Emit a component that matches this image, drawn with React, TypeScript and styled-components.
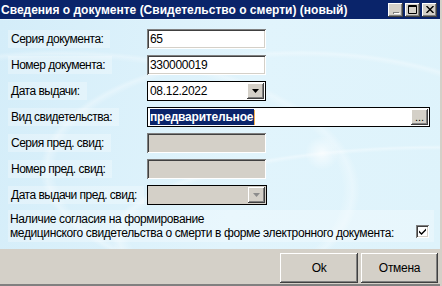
import React from "react";
import styled, { createGlobalStyle } from "styled-components";

const GlobalStyle = createGlobalStyle`
  html, body {
    margin: 0;
    padding: 0;
    background: #d4d0c8;
  }
  body {
    font-family: "Liberation Sans", Arial, sans-serif;
    font-size: 12px;
    color: #000;
  }
`;

const Window = styled.div`
  width: 442px;
  height: 286px;
  box-sizing: border-box;
  padding-right: 2px;
  display: flex;
  flex-direction: column;
  background: #d4d0c8;
  overflow: hidden;
`;

const TitleBar = styled.div`
  height: 19px;
  flex: none;
  display: flex;
  align-items: center;
  background: #0a246a;
  border-bottom: 1px solid #e9f7fd;
  padding: 0 3px 0 1px;
`;

const Title = styled.div`
  flex: 1;
  color: #fff;
  font-weight: bold;
  font-size: 12px;
  letter-spacing: 0;
  white-space: nowrap;
`;

const TitleButtons = styled.div`
  display: flex;
  align-items: center;
`;

const CaptionButton = styled.div<{ $gap?: number }>`
  width: 15px;
  height: 14px;
  margin-left: ${(p) => p.$gap ?? 0}px;
  display: flex;
  align-items: center;
  justify-content: center;
  background: #d4d0c8;
  box-shadow: inset -1px -1px #404040, inset 1px 1px #fff, inset -2px -2px #808080;
`;

const Body = styled.div`
  flex: 1;
  padding: 9px 6px 0 8px;
  background:
    radial-gradient(circle at 322px 133px, rgba(255, 255, 255, 0.7) 0, rgba(255, 255, 255, 0) 17px),
    radial-gradient(ellipse 330px 90px at 440px 215px, transparent 94%, rgba(255, 255, 255, 0.35) 97.5%, transparent 100%),
    radial-gradient(ellipse 260px 120px at 300px 150px, transparent 94%, rgba(255, 255, 255, 0.3) 97.5%, transparent 100%),
    radial-gradient(ellipse 300px 140px at 60px 170px, transparent 94%, rgba(255, 255, 255, 0.28) 97.5%, transparent 100%),
    linear-gradient(100deg, #d4edf9 0%, #e1f4fc 55%, #def3fb 100%);
`;

const Form = styled.div`
  display: grid;
  grid-template-columns: 139px auto;
  grid-auto-rows: 20px;
  row-gap: 6px;
`;

const Label = styled.div`
  align-self: center;
  justify-self: start;
  height: 18px;
  line-height: 18px;
  padding: 0 7px 0 3px;
  background: rgba(255, 255, 255, 0.28);
  letter-spacing: -0.5px;
  white-space: nowrap;
`;

const Field = styled.div<{ $width: number; $disabled?: boolean; $framed?: boolean }>`
  width: ${(p) => p.$width}px;
  height: 20px;
  box-sizing: border-box;
  display: flex;
  align-items: center;
  padding: ${(p) => (p.$framed ? "1px" : "2px")};
  background: ${(p) => (p.$disabled ? "#d4d0c8" : "#fff")};
  border: ${(p) => (p.$framed ? "1px solid #000" : "none")};
  box-shadow: ${(p) =>
    p.$framed
      ? "none"
      : "inset 1px 1px #808080, inset -1px -1px #fff, inset 2px 2px #404040, inset -2px -2px #d4d0c8"};
`;

const FieldText = styled.span`
  flex: 1;
  display: flex;
  align-items: center;
  height: 16px;
  padding-left: 1px;
  white-space: nowrap;
  letter-spacing: -0.3px;
`;

const Selected = styled.span`
  background: #0a246a;
  color: #fff;
  font-weight: bold;
  letter-spacing: -0.2px;
  line-height: 16px;
  padding-right: 1px;
`;

const Caret = styled.span`
  width: 1px;
  height: 15px;
  background: #f0b050;
`;

const SmallButton = styled.div`
  flex: none;
  width: 17px;
  height: 16px;
  display: flex;
  align-items: center;
  justify-content: center;
  background: #d4d0c8;
  box-shadow: inset -1px -1px #404040, inset 1px 1px #fff, inset -2px -2px #808080;
  font-size: 11px;
  line-height: 10px;
`;

const ConsentRow = styled.div`
  margin-top: 5px;
  height: 30px;
  display: flex;
  align-items: flex-end;
  justify-content: space-between;
  background: rgba(255, 255, 255, 0.28);
  padding: 0 5px 2px 2px;
`;

const ConsentText = styled.div`
  line-height: 13.5px;
  letter-spacing: -0.38px;
`;

const CheckBox = styled.div`
  width: 13px;
  height: 13px;
  margin-bottom: 2px;
  box-sizing: border-box;
  background: #fff;
  display: flex;
  align-items: center;
  justify-content: center;
  box-shadow: inset 1px 1px #808080, inset -1px -1px #fff, inset 2px 2px #404040, inset -2px -2px #d4d0c8;
`;

const Footer = styled.div`
  height: 37px;
  flex: none;
  box-sizing: border-box;
  display: flex;
  justify-content: flex-end;
  align-items: flex-start;
  gap: 3px;
  padding: 4px 2px 0 0;
  background: #d4d0c8;
  box-shadow: inset 0 -2px #808080, inset 0 -1px #404040;
`;

const DialogButton = styled.div<{ $width: number }>`
  width: ${(p) => p.$width}px;
  height: 30px;
  display: flex;
  align-items: center;
  justify-content: center;
  background: #d4d0c8;
  box-shadow: inset -1px -1px #404040, inset 1px 1px #fff, inset -2px -2px #808080;
  letter-spacing: -0.3px;
`;

const Arrow = ({ color }: { color: string }) => (
  <svg width="7" height="4" viewBox="0 0 7 4">
    <path d="M0 0h7L3.5 4z" fill={color} />
  </svg>
);

type Row = {
  label: string;
  value?: string;
  kind: "text" | "date" | "picker" | "disabled" | "combo";
};

const rows: Row[] = [
  { label: "Серия документа:", value: "65", kind: "text" },
  { label: "Номер документа:", value: "330000019", kind: "text" },
  { label: "Дата выдачи:", value: "08.12.2022", kind: "date" },
  { label: "Вид свидетельства:", value: "предварительное", kind: "picker" },
  { label: "Серия пред. свид:", kind: "disabled" },
  { label: "Номер пред. свид:", kind: "disabled" },
  { label: "Дата выдачи пред. свид:", kind: "combo" },
];

const renderField = (row: Row) => {
  switch (row.kind) {
    case "text":
      return (
        <Field $width={119}>
          <FieldText>{row.value}</FieldText>
        </Field>
      );
    case "date":
      return (
        <Field $width={119} $framed>
          <FieldText>{row.value}</FieldText>
          <SmallButton>
            <Arrow color="#000" />
          </SmallButton>
        </Field>
      );
    case "picker":
      return (
        <Field $width={283} $framed>
          <FieldText>
            <Selected>{row.value}</Selected>
            <Caret />
          </FieldText>
          <SmallButton>...</SmallButton>
        </Field>
      );
    case "disabled":
      return <Field $width={119} $disabled />;
    case "combo":
      return (
        <Field $width={120} $framed $disabled>
          <FieldText />
          <SmallButton>
            <Arrow color="#8c8c8c" />
          </SmallButton>
        </Field>
      );
  }
};

const App = () => {
  return (
    <>
      <GlobalStyle />
      <Window>
        <TitleBar>
          <Title>Сведения о документе (Свидетельство о смерти) (новый)</Title>
          <TitleButtons>
            <CaptionButton>
              <svg width="8" height="8" viewBox="0 0 8 8">
                <rect x="1" y="6" width="6" height="2" fill="#808080" />
                <rect x="2" y="7" width="6" height="1" fill="#fff" />
              </svg>
            </CaptionButton>
            <CaptionButton $gap={2}>
              <svg width="9" height="9" viewBox="0 0 9 9">
                <path d="M0.5 0.5h8v8h-8z M0.5 1.5h8" fill="none" stroke="#000" />
              </svg>
            </CaptionButton>
            <CaptionButton $gap={2}>
              <svg width="8" height="7" viewBox="0 0 8 7">
                <path d="M0.5 0l7 7M7.5 0l-7 7" stroke="#000" strokeWidth="1.4" />
              </svg>
            </CaptionButton>
          </TitleButtons>
        </TitleBar>
        <Body>
          <Form>
            {rows.map((row) => (
              <React.Fragment key={row.label}>
                <Label>{row.label}</Label>
                {renderField(row)}
              </React.Fragment>
            ))}
          </Form>
          <ConsentRow>
            <ConsentText>
              Наличие согласия на формирование
              <br />
              медицинского свидетельства о смерти в форме электронного документа:
            </ConsentText>
            <CheckBox>
              <svg width="7" height="7" viewBox="0 0 7 7">
                <path d="M0 2.5l2.5 2.5L7 0.5v2L2.5 7 0 4.5z" fill="#000" />
              </svg>
            </CheckBox>
          </ConsentRow>
        </Body>
        <Footer>
          <DialogButton $width={78}>Ok</DialogButton>
          <DialogButton $width={77}>Отмена</DialogButton>
        </Footer>
      </Window>
    </>
  );
};

export default App;
